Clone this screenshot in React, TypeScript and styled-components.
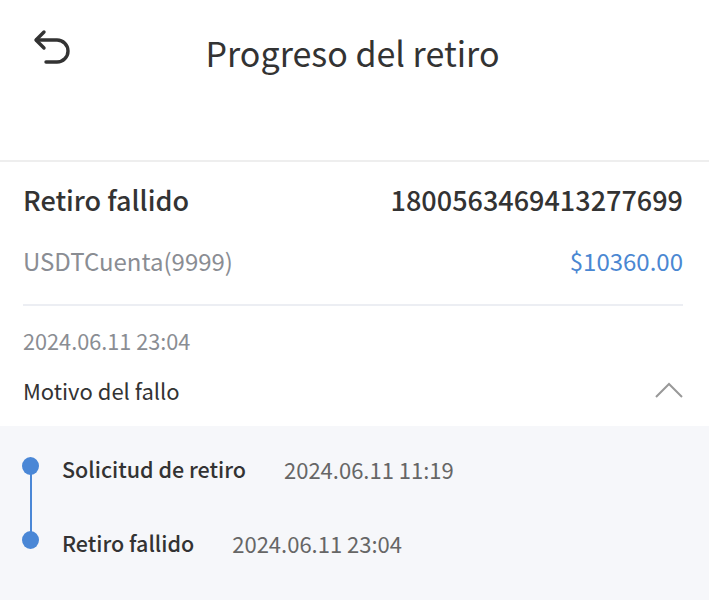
import React from "react";
import styled, { createGlobalStyle } from "styled-components";

const Global = createGlobalStyle`
  html, body { margin: 0; padding: 0; background: #fff; }
  body { font-family: "Noto Sans CJK SC", "Noto Sans", sans-serif; }
`;

const Page = styled.div`
  width: 709px;
  min-height: 600px;
  display: flex;
  flex-direction: column;
  background: #fff;
`;

const Header = styled.header`
  height: 104px;
  display: grid;
  grid-template-columns: 70px 1fr 74px;
  align-items: center;
  padding: 0 22px 0 22px;
  box-sizing: border-box;
`;

const BackBtn = styled.button`
  border: 0;
  background: none;
  padding: 0 0 8px 11px;
  width: 70px;
  height: 60px;
  display: flex;
  align-items: center;
  justify-content: flex-start;
`;

const Title = styled.h1`
  margin: 0;
  text-align: center;
  font-size: 34px;
  font-weight: 400;
  color: #333;
`;

const Spacer = styled.div`
  height: 56px;
  border-bottom: 2px solid #eeeeee;
`;

const Card = styled.section`
  padding: 0 26px 24px 23px;
  display: flex;
  flex-direction: column;
`;

const Row = styled.div<{ $h: number; $mt?: number }>`
  display: flex;
  justify-content: space-between;
  align-items: center;
  height: ${(p) => p.$h}px;
  margin-top: ${(p) => p.$mt ?? 0}px;
`;

const Strong = styled.span`
  font-size: 27px;
  font-weight: 500;
  color: #333;
`;

const Muted = styled.span<{ $size: number }>`
  font-size: ${(p) => p.$size}px;
  color: #8a8d93;
`;

const Amount = styled.span`
  font-size: 24px;
  color: #4a87d2;
`;

const Divider = styled.hr`
  margin: 20px 0 0 0;
  border: 0;
  border-top: 2px solid #eceef3;
`;

const Plain = styled.span`
  font-size: 22px;
  color: #333;
`;

const Timeline = styled.section`
  flex: 1;
  background: #f6f7fa;
  padding: 30px 0 30px 22px;
  display: flex;
  flex-direction: column;
  gap: 54px;
  position: relative;
`;

const Step = styled.div`
  display: flex;
  align-items: center;
  height: 20px;
`;

const Dot = styled.span`
  width: 17px;
  height: 18px;
  border-radius: 50%;
  background: #4a87d6;
  flex-shrink: 0;
  margin-right: 23px;
`;

const Line = styled.span`
  position: absolute;
  left: 30px;
  top: 40px;
  width: 2px;
  height: 74px;
  background: #4a87d6;
`;

const StepName = styled.span<{ $gap: number }>`
  font-size: 21.5px;
  font-weight: 500;
  color: #333;
  margin-right: ${(p) => p.$gap}px;
  margin-top: 5px;
`;

const StepDate = styled.span`
  font-size: 22px;
  color: #666;
  margin-top: 5px;
`;

export default function App() {
  return (
    <Page>
      <Global />
      <Header>
        <BackBtn aria-label="back">
          <svg width="38" height="38" viewBox="0 0 38 38" fill="none" stroke="#333" strokeWidth="3.4" strokeLinecap="round" strokeLinejoin="round">
            <path d="M11 3 L3 11 L11 19" />
            <path d="M3.5 11 H24 a11 11 0 0 1 0 22 H13" />
          </svg>
        </BackBtn>
        <Title>Progreso del retiro</Title>
        <div />
      </Header>
      <Spacer />
      <Card>
        <Row $h={74}>
          <Strong>Retiro fallido</Strong>
          <Strong>1800563469413277699</Strong>
        </Row>
        <Row $h={48}>
          <Muted $size={24}>USDTCuenta(9999)</Muted>
          <Amount>$10360.00</Amount>
        </Row>
        <Divider />
        <Row $h={68}>
          <Muted $size={21.7}>2024.06.11 23:04</Muted>
        </Row>
        <Row $h={24} $mt={4}>
          <Plain>Motivo del fallo</Plain>
          <svg width="28" height="16" viewBox="0 0 28 16" fill="none" stroke="#999" strokeWidth="2">
            <path d="M1 15 L14 2 L27 15" />
          </svg>
        </Row>
      </Card>
      <Timeline>
        <Line />
        <Step>
          <Dot />
          <StepName $gap={38}>Solicitud de retiro</StepName>
          <StepDate>2024.06.11 11:19</StepDate>
        </Step>
        <Step>
          <Dot />
          <StepName $gap={38}>Retiro fallido</StepName>
          <StepDate>2024.06.11 23:04</StepDate>
        </Step>
      </Timeline>
    </Page>
  );
}
